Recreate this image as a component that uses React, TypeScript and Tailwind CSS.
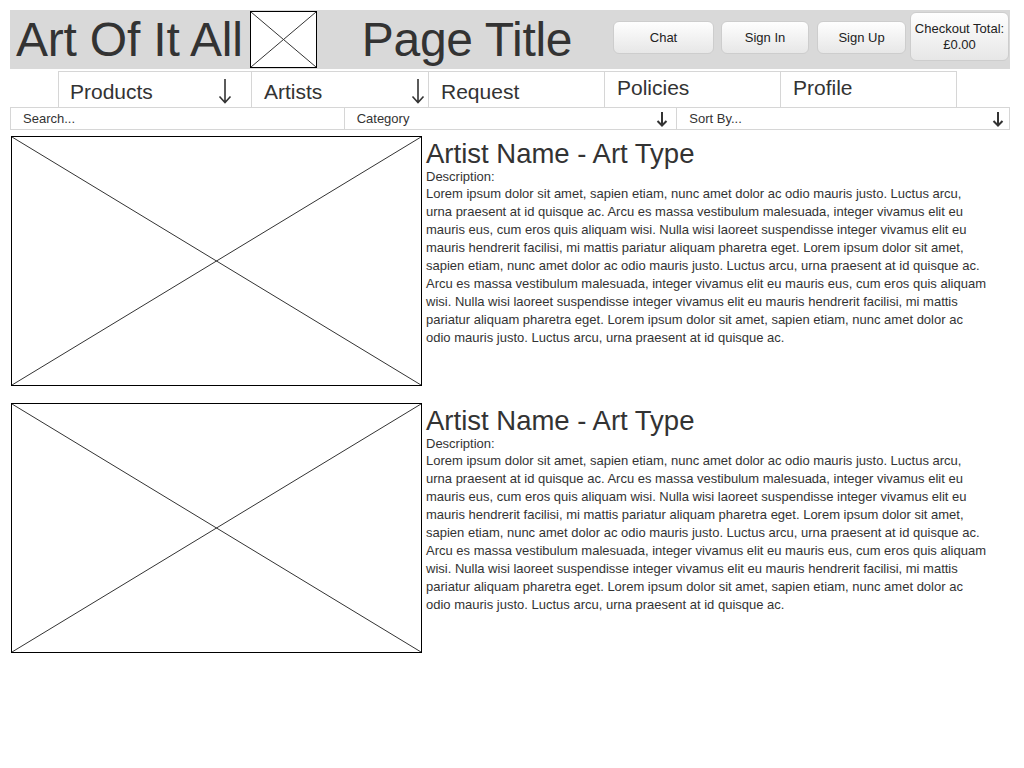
import React from "react";

const lorem =
  "Lorem ipsum dolor sit amet, sapien etiam, nunc amet dolor ac odio mauris justo. Luctus arcu, urna praesent at id quisque ac. Arcu es massa vestibulum malesuada, integer vivamus elit eu mauris eus, cum eros quis aliquam wisi. Nulla wisi laoreet suspendisse integer vivamus elit eu mauris hendrerit facilisi, mi mattis pariatur aliquam pharetra eget. Lorem ipsum dolor sit amet, sapien etiam, nunc amet dolor ac odio mauris justo. Luctus arcu, urna praesent at id quisque ac. Arcu es massa vestibulum malesuada, integer vivamus elit eu mauris eus, cum eros quis aliquam wisi. Nulla wisi laoreet suspendisse integer vivamus elit eu mauris hendrerit facilisi, mi mattis pariatur aliquam pharetra eget. Lorem ipsum dolor sit amet, sapien etiam, nunc amet dolor ac odio mauris justo. Luctus arcu, urna praesent at id quisque ac.";

function XBox({ className }: { className: string }) {
  return (
    <div className={"relative border border-black bg-white " + className}>
      <svg className="absolute inset-0 h-full w-full" preserveAspectRatio="none" viewBox="0 0 100 100">
        <line x1="0" y1="0" x2="100" y2="100" stroke="#333" strokeWidth="1" vectorEffect="non-scaling-stroke" />
        <line x1="100" y1="0" x2="0" y2="100" stroke="#333" strokeWidth="1" vectorEffect="non-scaling-stroke" />
      </svg>
    </div>
  );
}

function ThinArrow() {
  return (
    <svg width="14" height="26" viewBox="0 0 14 26" className="shrink-0">
      <path d="M7 1 V24.5 M1.5 18.5 L7 24.5 L12.5 18.5" fill="none" stroke="#333" strokeWidth="1.6" />
    </svg>
  );
}

function BoldArrow() {
  return (
    <svg width="12" height="16" viewBox="0 0 12 16" className="shrink-0">
      <path d="M6 1 V14.5 M1.5 10 L6 14.5 L10.5 10" fill="none" stroke="#333" strokeWidth="2" />
    </svg>
  );
}

function Btn({ children, className }: { children: React.ReactNode; className: string }) {
  return (
    <div
      className={
        "flex flex-col items-center justify-center rounded-[6px] border border-[#cdcdcd] bg-gradient-to-b from-[#fefefe] to-[#e7e7e7] text-[13px] text-[#222] " +
        className
      }
    >
      {children}
    </div>
  );
}

function Item() {
  return (
    <div className="flex">
      <XBox className="h-[250px] w-[411px] shrink-0" />
      <div className="ml-[4px] w-[564px] pt-[2px] text-[#333]">
        <div className="text-[27.5px] leading-[32px]">Artist Name - Art Type</div>
        <div className="text-[13px] leading-[14px]">Description:</div>
        <div className="mt-[1px] text-[13px] leading-[18px]">{lorem}</div>
      </div>
    </div>
  );
}

export default function App() {
  return (
    <div className="min-h-[768px] bg-white pl-[10px] pr-[14px] pt-[10px] text-[#333]" style={{ fontFamily: '"Liberation Sans", Arial, sans-serif' }}>
      {/* Header */}
      <div className="flex h-[59px] items-stretch bg-[#d9d9d9]">
        <div className="ml-[6px] pt-[5px] text-[48px] leading-[50px] tracking-[-0.2px]">Art Of It All</div>
        <XBox className="ml-[7px] mt-[1px] h-[57px] w-[67px] shrink-0" />
        <div className="ml-[45px] pt-[5px] text-[48px] leading-[50px] tracking-[-0.3px]">Page Title</div>
        <div className="ml-auto flex items-start">
          <Btn className="mt-[11px] h-[33px] w-[101px]">Chat</Btn>
          <Btn className="ml-[7px] mt-[11px] h-[33px] w-[88px]">Sign In</Btn>
          <Btn className="ml-[8px] mt-[11px] h-[33px] w-[89px]">Sign Up</Btn>
          <Btn className="ml-[4px] mr-[1px] mt-[2px] h-[49px] w-[99px] leading-[16px]">
            <span>Checkout Total:</span>
            <span>£0.00</span>
          </Btn>
        </div>
      </div>

      {/* Nav */}
      <div className="mt-[2px] flex h-[37px]">
        <div className="w-[48px] shrink-0" />
        <div className="flex w-[194px] shrink-0 items-center border border-[#d6d6d6] pl-[11px] pr-[19px]">
          <span className="mt-[4px] text-[21px]">Products</span>
          <span className="ml-auto mt-[2px]"><ThinArrow /></span>
        </div>
        <div className="flex w-[177px] shrink-0 items-center border border-l-0 border-[#d6d6d6] pl-[12px] pr-[3px]">
          <span className="mt-[4px] text-[21px]">Artists</span>
          <span className="ml-auto mt-[2px]"><ThinArrow /></span>
        </div>
        <div className="flex w-[176px] shrink-0 items-center border border-l-0 border-[#d6d6d6] pl-[12px]">
          <span className="mt-[4px] text-[21px]">Request</span>
        </div>
        <div className="flex w-[176px] shrink-0 items-start border border-l-0 border-[#d6d6d6] pl-[12px]">
          <span className="text-[21px]">Policies</span>
        </div>
        <div className="flex w-[176px] shrink-0 items-start border border-l-0 border-[#d6d6d6] pl-[12px]">
          <span className="text-[21px]">Profile</span>
        </div>
      </div>

      {/* Search row */}
      <div className="-mt-[1px] grid h-[23px] grid-cols-3 border border-[#d6d6d6] text-[13px]">
        <div className="flex items-center pl-[12px]">Search...</div>
        <div className="flex items-center border-l border-[#d6d6d6] pl-[12px] pr-[8px]">
          <span>Category</span>
          <span className="ml-auto"><BoldArrow /></span>
        </div>
        <div className="flex items-center border-l border-[#d6d6d6] pl-[12px] pr-[5px]">
          <span>Sort By...</span>
          <span className="ml-auto"><BoldArrow /></span>
        </div>
      </div>

      {/* Content */}
      <div className="mt-[6px] flex flex-col gap-[17px] pl-[1px]">
        <Item />
        <Item />
      </div>
    </div>
  );
}
